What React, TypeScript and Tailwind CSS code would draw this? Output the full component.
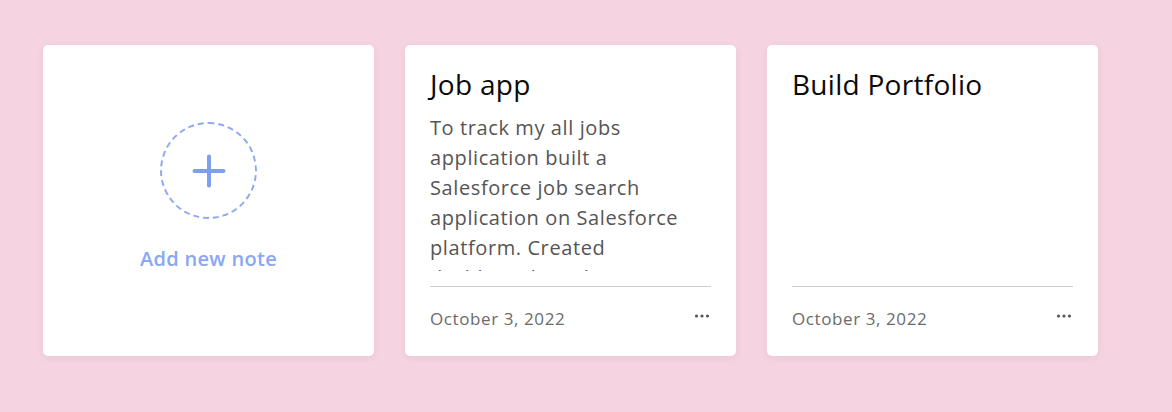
import React from "react";

const font = { fontFamily: '"Open Sans", "Noto Sans", sans-serif' };

function Dots() {
  return (
    <svg width="16" height="6" viewBox="0 0 16 6" className="block">
      <circle cx="2.5" cy="3" r="1.6" fill="#555" />
      <circle cx="8" cy="3" r="1.6" fill="#555" />
      <circle cx="13.5" cy="3" r="1.6" fill="#555" />
    </svg>
  );
}

function NoteCard({ title, body }: { title: string; body: string }) {
  return (
    <div className="flex h-[311px] w-[331px] flex-col rounded-[5px] bg-white px-[25px] pt-[24px] pb-[25px] shadow-[0_2px_8px_rgba(0,0,0,0.06)]">
      <h2 className="h-[30px] text-[28px] leading-[30px] tracking-[0.01em] text-[#0a0a0a]">{title}</h2>
      <p className="mt-[14px] h-[158px] overflow-hidden text-[20px] leading-[30px] tracking-[0.03em] text-[#555]">{body}</p>
      <div className="mt-[15px] h-px bg-[#cfcfcf]" />
      <div className="mt-[20px] flex h-[24px] items-center justify-between">
        <span className="text-[17px] leading-[24px] tracking-[0.035em] text-[#6b6b6b]">October 3, 2022</span>
        <span className="-mt-[6px] pr-[1px]"><Dots /></span>
      </div>
    </div>
  );
}

export default function App() {
  return (
    <div className="min-h-[412px] w-full bg-[#f6d3e1] pt-[45px] pl-[43px]" style={font}>
      <div className="flex gap-[31px]">
        <div className="flex h-[311px] w-[331px] flex-col items-center justify-center rounded-[5px] bg-white pb-[8px] shadow-[0_2px_8px_rgba(0,0,0,0.06)]">
          <div className="flex h-[97px] w-[97px] items-center justify-center rounded-full border-2 border-dashed border-[#8fa9ee]">
            <svg width="36" height="36" viewBox="0 0 36 36">
              <path d="M18 3.5v29M3.5 18h29" stroke="#7e9ef0" strokeWidth="4" strokeLinecap="round" />
            </svg>
          </div>
          <div className="mt-[28px] text-[20px] font-semibold leading-[24px] tracking-[0.015em] text-[#89a7f3]">Add new note</div>
        </div>
        <NoteCard
          title="Job app"
          body="To track my all jobs application built a Salesforce job search application on Salesforce platform. Created dashboards and reports in Salesforce."
        />
        <NoteCard title="Build Portfolio" body="" />
      </div>
    </div>
  );
}
